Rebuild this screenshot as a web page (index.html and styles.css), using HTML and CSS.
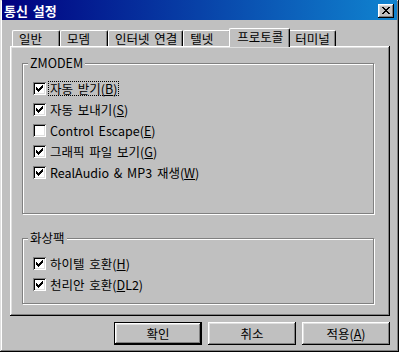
FILE: index.html
```html
<html>
<head>
<meta charset="utf-8">
<link rel="stylesheet" href="styles.css">
</head>
<body>
<div class="window">
  <div class="titlebar">
    <span class="title">통신 설정</span>
    <button type="button" class="close">
      <svg width="8" height="7" viewBox="0 0 8 7" shape-rendering="crispEdges"><path d="M0 0h2v1H0zM6 0h2v1H6zM1 1h2v1H1zM5 1h2v1H5zM2 2h4v1H2zM3 3h2v1H3zM2 4h4v1H2zM1 5h2v1H1zM5 5h2v1H5zM0 6h2v1H0zM6 6h2v1H6z" fill="#000"/></svg>
    </button>
  </div>

  <div class="dialog">
    <div class="tabs">
      <div class="tab">일반</div>
      <div class="tab">모뎀</div>
      <div class="tab">인터넷 연결</div>
      <div class="tab">텔넷</div>
      <div class="tab active">프로토콜</div>
      <div class="tab">터미널</div>
    </div>

    <div class="panel">
      <div class="group group-zmodem">
        <div class="group-title">ZMODEM</div>
        <div class="options">
          <div class="opt"><span class="box"><svg width="7" height="7" viewBox="0 0 7 7" shape-rendering="crispEdges"><path d="M0 2h1v3H0zM1 3h1v3H1zM2 4h1v3H2zM3 3h1v3H3zM4 2h1v3H4zM5 1h1v3H5zM6 0h1v3H6z"/></svg></span><span class="text focus">자동 받기(<u>B</u>)</span></div>
          <div class="opt"><span class="box"><svg width="7" height="7" viewBox="0 0 7 7" shape-rendering="crispEdges"><path d="M0 2h1v3H0zM1 3h1v3H1zM2 4h1v3H2zM3 3h1v3H3zM4 2h1v3H4zM5 1h1v3H5zM6 0h1v3H6z"/></svg></span><span class="text">자동 보내기(<u>S</u>)</span></div>
          <div class="opt"><span class="box"></span><span class="text">Control Escape(<u>E</u>)</span></div>
          <div class="opt"><span class="box"><svg width="7" height="7" viewBox="0 0 7 7" shape-rendering="crispEdges"><path d="M0 2h1v3H0zM1 3h1v3H1zM2 4h1v3H2zM3 3h1v3H3zM4 2h1v3H4zM5 1h1v3H5zM6 0h1v3H6z"/></svg></span><span class="text">그래픽 파일 보기(<u>G</u>)</span></div>
          <div class="opt"><span class="box"><svg width="7" height="7" viewBox="0 0 7 7" shape-rendering="crispEdges"><path d="M0 2h1v3H0zM1 3h1v3H1zM2 4h1v3H2zM3 3h1v3H3zM4 2h1v3H4zM5 1h1v3H5zM6 0h1v3H6z"/></svg></span><span class="text">RealAudio &amp; MP3 재생(<u>W</u>)</span></div>
        </div>
      </div>

      <div class="group group-image">
        <div class="group-title">화상팩</div>
        <div class="options">
          <div class="opt"><span class="box"><svg width="7" height="7" viewBox="0 0 7 7" shape-rendering="crispEdges"><path d="M0 2h1v3H0zM1 3h1v3H1zM2 4h1v3H2zM3 3h1v3H3zM4 2h1v3H4zM5 1h1v3H5zM6 0h1v3H6z"/></svg></span><span class="text">하이텔 호환(<u>H</u>)</span></div>
          <div class="opt"><span class="box"><svg width="7" height="7" viewBox="0 0 7 7" shape-rendering="crispEdges"><path d="M0 2h1v3H0zM1 3h1v3H1zM2 4h1v3H2zM3 3h1v3H3zM4 2h1v3H4zM5 1h1v3H5zM6 0h1v3H6z"/></svg></span><span class="text">천리안 호환(<u>D</u>L2)</span></div>
        </div>
      </div>
    </div>

    <div class="actions">
      <button type="button" class="btn default">확인</button>
      <button type="button" class="btn">취소</button>
      <button type="button" class="btn">적용(<u>A</u>)</button>
    </div>
  </div>
</div>
</body>
</html>
```

FILE: styles.css
```css
* {
  box-sizing: border-box;
}

body {
  margin: 0;
  background: #c0c0c0;
  font-family: "Noto Sans CJK KR", "Liberation Sans", sans-serif;
  font-size: 12.5px;
  word-spacing: 2px;
  color: #000;
}

.window {
  width: 399px;
  height: 352px;
  padding: 0 2px 2px 2px;
  background: #c0c0c0;
  box-shadow: inset -1px -1px #000, inset 1px 1px #dfdfdf,
    inset -2px -2px #808080, inset 2px 2px #fff;
}

.titlebar {
  height: 20px;
  display: flex;
  align-items: center;
  justify-content: space-between;
  padding: 1px 3px 0 2px;
  background: linear-gradient(to right, #000080, #1084d0);
  color: #fff;
  font-weight: bold;
}

.title {
  font-size: 13px;
  line-height: 14px;
}

.close {
  width: 16px;
  height: 14px;
  padding: 0;
  border: none;
  background: #c0c0c0;
  display: flex;
  align-items: center;
  justify-content: center;
  box-shadow: inset -1px -1px #000, inset 1px 1px #fff,
    inset -2px -2px #808080, inset 2px 2px #dfdfdf;
}

.close svg {
  display: block;
}

.dialog {
  padding: 8px 7px 0 8px;
}

.tabs {
  display: flex;
  align-items: flex-end;
  height: 18px;
  padding-left: 2px;
}

.tab {
  height: 16px;
  min-width: 48px;
  padding: 0 5px 0 6px;
  line-height: 15px;
  border-left: 1px solid #fff;
  border-top: 1px solid #fff;
  border-right: 1px solid #000;
  border-radius: 2px 2px 0 0;
  box-shadow: inset -1px 0 #808080;
  white-space: nowrap;
}

.tab.active {
  height: 19px;
  margin: 0 -2px -1px;
  padding: 0 6px 0 7px;
  line-height: 16px;
  position: relative;
  z-index: 1;
  background: #c0c0c0;
}

.panel {
  height: 270px;
  padding: 17px 16px 0 12px;
  box-shadow: inset -1px -1px #000, inset 1px 1px #fff,
    inset -2px -2px #808080, inset 2px 2px #dfdfdf;
}

.group {
  border: 1px solid #808080;
  box-shadow: 1px 1px #fff, inset 1px 1px #fff;
  padding: 0 0 30px 10px;
}

.group-image {
  margin-top: 24px;
  padding-bottom: 8px;
}

.group-title {
  display: table;
  margin: -7px 0 0 -5px;
  padding: 0 2px;
  line-height: 12px;
  background: #c0c0c0;
}

.options {
  margin-top: 9px;
}

.opt {
  display: flex;
  align-items: center;
  height: 21px;
  gap: 3px;
}

.box {
  width: 13px;
  height: 13px;
  flex: none;
  background: #fff;
  display: flex;
  align-items: center;
  justify-content: center;
  box-shadow: inset 1px 1px #808080, inset -1px -1px #fff,
    inset 2px 2px #000, inset -2px -2px #dfdfdf;
}

.box svg {
  display: block;
}

.text {
  padding: 0 1px;
  line-height: 13px;
  white-space: nowrap;
}

.focus {
  outline: 1px dotted #000;
}

.actions {
  display: flex;
  justify-content: flex-end;
  gap: 6px;
  margin-top: 6px;
}

.btn {
  width: 88px;
  height: 23px;
  padding: 0;
  border: none;
  background: #c0c0c0;
  font: inherit;
  color: #000;
  box-shadow: inset -1px -1px #000, inset 1px 1px #fff,
    inset -2px -2px #808080, inset 2px 2px #dfdfdf;
}

.btn.default {
  border: 1px solid #000;
}
```
